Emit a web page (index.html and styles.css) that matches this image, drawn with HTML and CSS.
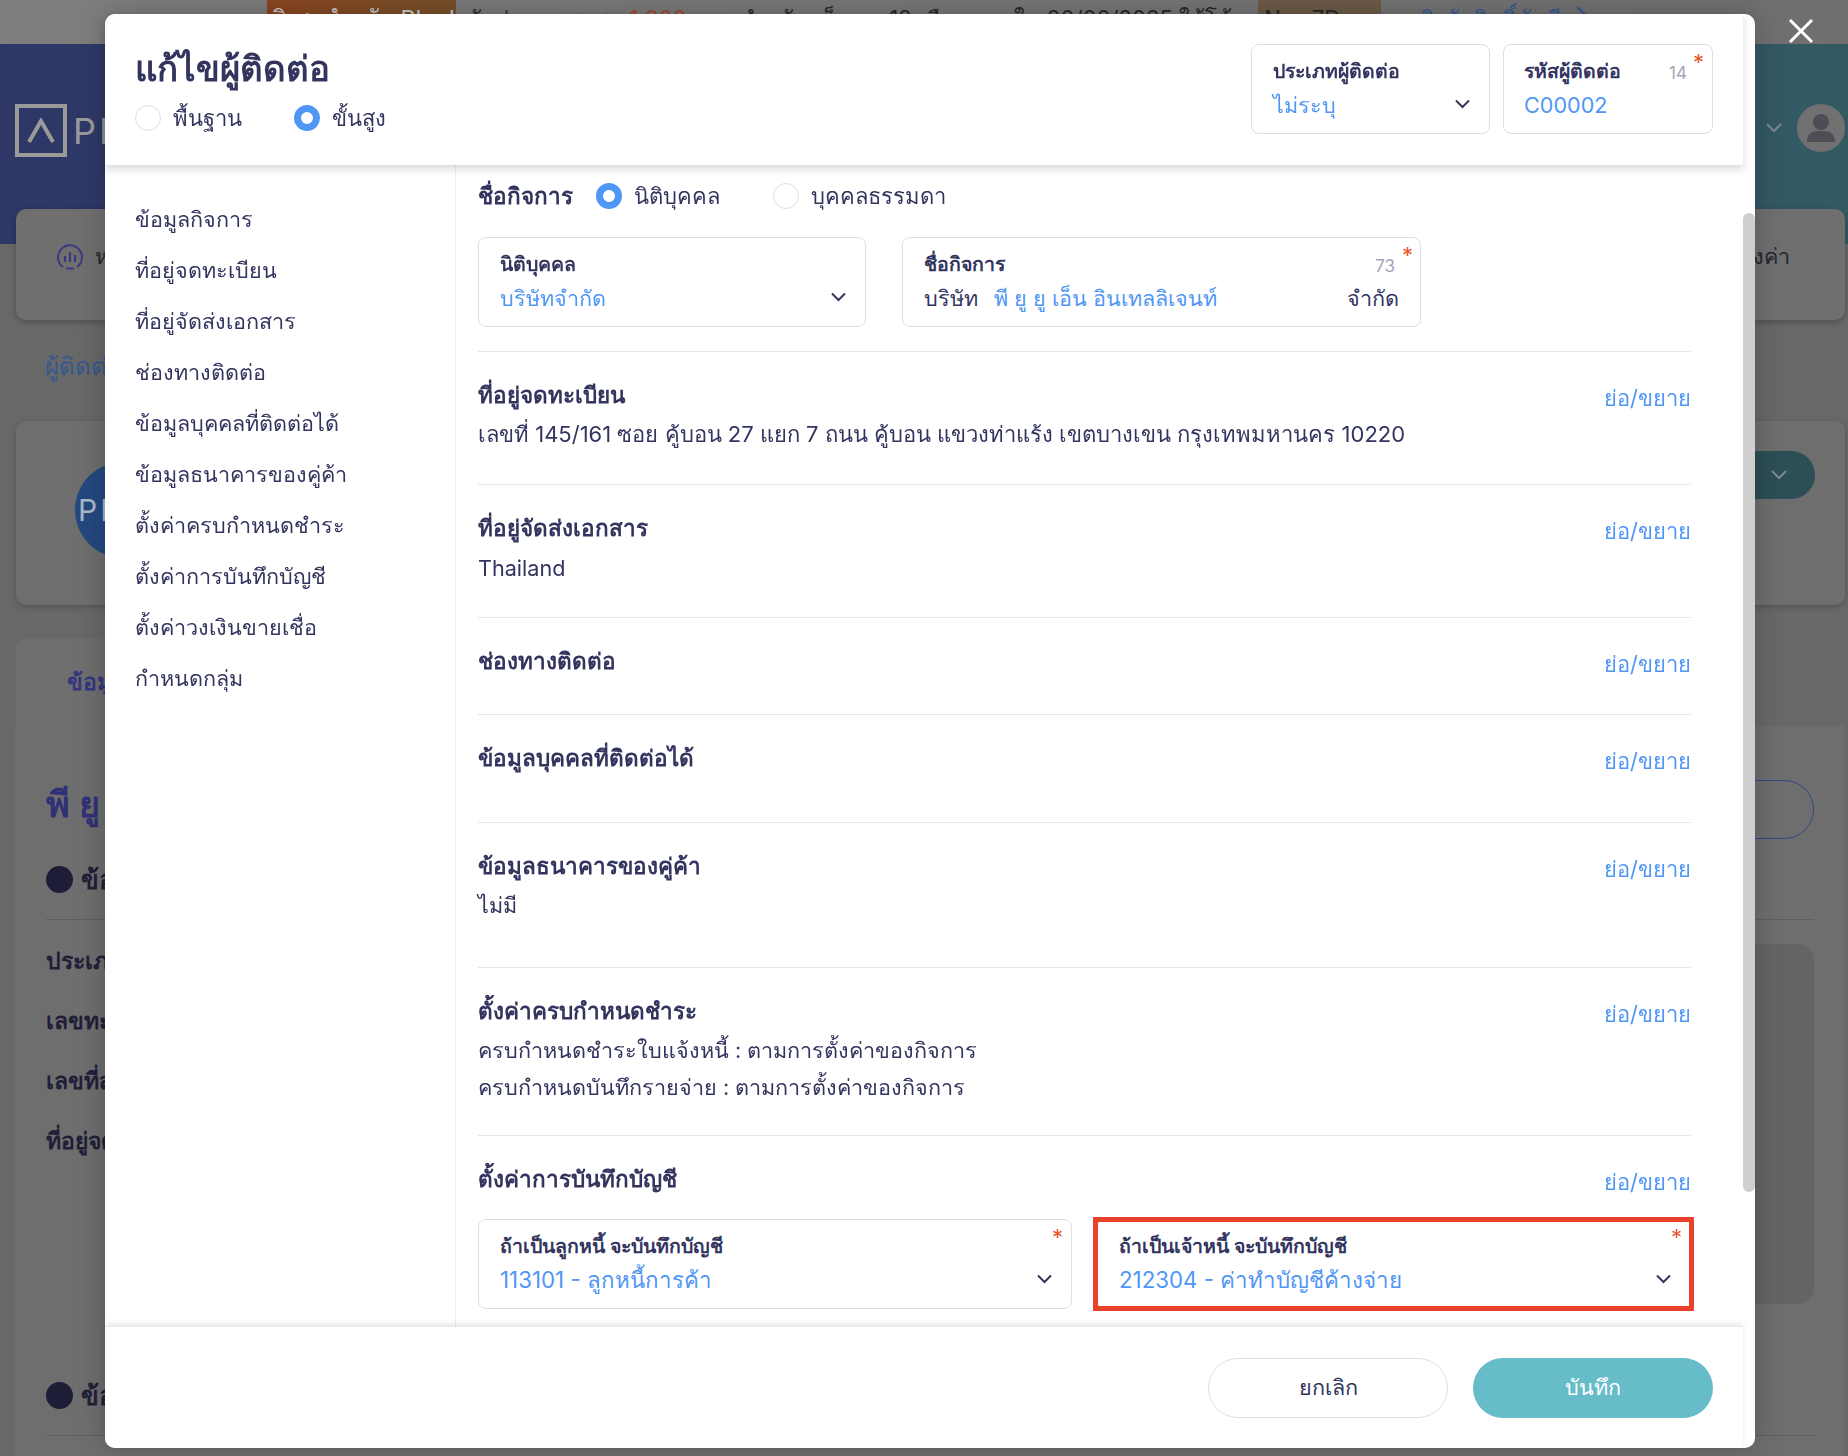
FILE: index.html
```html
<!DOCTYPE html>
<html lang="th">
<head>
<meta charset="utf-8">
<title>แก้ไขผู้ติดต่อ</title>
<link rel="stylesheet" href="styles.css">
</head>
<body>
<div class="backdrop">
  <div class="promo">
    <span class="promo-badge">พิเศษสำหรับ Pleul</span>
    <span class="promo-text">รับส่วนลด <b>สูงสุด 1,200 บาท</b> สำหรับแพ็กเกจ 12 เดือน ภายใน 00/00/2025 ใช้โค้ด</span>
    <span class="promo-code">New7Days</span>
    <span class="promo-link">คลิกรับสิทธิ์ทันที</span>
    <svg class="promo-chev" width="14" height="22" viewBox="0 0 14 22"><path d="M2 2l10 9-10 9" fill="none" stroke="#3a5a90" stroke-width="2.5"/></svg>
  </div>
  <div class="band">
    <div class="logo">
      <span class="logo-box"><svg width="30" height="26" viewBox="0 0 30 26"><path d="M3 24L15 3l12 21" fill="none" stroke="#9a9a9a" stroke-width="4"/></svg></span>
      <span class="logo-text">PEAK</span>
    </div>
    <div class="band-user">
      <svg width="16" height="10" viewBox="0 0 16 10"><path d="M1 1l7 7 7-7" fill="none" stroke="#7c8a8d" stroke-width="2"/></svg>
      <span class="avatar"><svg width="30" height="30" viewBox="0 0 30 30"><circle cx="15" cy="9" r="8" fill="#4d4e55"/><path d="M1 29c0-7 4-11 10-11h8c6 0 10 4 10 11z" fill="#4d4e55"/></svg></span>
    </div>
  </div>
  <div class="nav-card">
    <div class="nav-left">
      <svg width="26" height="26" viewBox="0 0 26 26"><path d="M6 23A12 12 0 1 1 20 23M9 24.500h8" fill="none" stroke="#3b3a80" stroke-width="2"/><path d="M8 12v6M13 8v10M18 11v7" stroke="#3b3a80" stroke-width="2.200"/></svg>
      <span>หน้าหลัก</span>
    </div>
    <span>ตั้งค่า</span>
  </div>
  <div class="crumb">ผู้ติดต่อ</div>
  <div class="company-card">
    <span class="company-logo">PEAK</span>
    <span class="company-btn"><svg width="16" height="10" viewBox="0 0 16 10"><path d="M1 1l7 7 7-7" fill="none" stroke="#7c8a8d" stroke-width="2"/></svg></span>
  </div>
  <div class="tab">ข้อมูลทั่วไป</div>
  <div class="detail">
    <div class="detail-head">
      <h2>พี ยู ยู เอ็น อินเทลลิเจนท์</h2>
      <span class="detail-pill"></span>
    </div>
    <div class="bullet-row"><i></i><span>ข้อมูลทั่วไป</span></div>
    <div class="detail-body">
      <div class="detail-rows">
        <div>ประเภทกิจการ</div>
        <div>เลขทะเบียน</div>
        <div>เลขที่สาขา</div>
        <div>ที่อยู่จดทะเบียน</div>
      </div>
      <div class="detail-panel"></div>
    </div>
    <div class="bullet-row bullet-row-next"><i></i><span>ข้อมูลติดต่อ</span></div>
  </div>
</div>

<div class="modal">
  <header class="modal-head">
    <div class="head-left">
      <h1>แก้ไขผู้ติดต่อ</h1>
      <div class="radio-row">
        <label class="radio"><i class="dot"></i>พื้นฐาน</label>
        <label class="radio radio-second"><i class="dot on"></i>ขั้นสูง</label>
      </div>
    </div>
    <div class="head-fields">
      <div class="field f-type">
        <div class="f-label">ประเภทผู้ติดต่อ</div>
        <div class="f-value">ไม่ระบุ</div>
        <svg class="chev" width="15" height="10" viewBox="0 0 15 10"><path d="M1 1.500l6.500 6.500L14 1.500" fill="none" stroke="#33355f" stroke-width="2"/></svg>
      </div>
      <div class="field f-code">
        <div class="f-label">รหัสผู้ติดต่อ</div>
        <div class="f-value">C00002</div>
        <span class="count">14</span><span class="star">*</span>
      </div>
    </div>
  </header>
  <div class="modal-body">
    <nav class="side">
      <a>ข้อมูลกิจการ</a>
      <a>ที่อยู่จดทะเบียน</a>
      <a>ที่อยู่จัดส่งเอกสาร</a>
      <a>ช่องทางติดต่อ</a>
      <a>ข้อมูลบุคคลที่ติดต่อได้</a>
      <a>ข้อมูลธนาคารของคู่ค้า</a>
      <a>ตั้งค่าครบกำหนดชำระ</a>
      <a>ตั้งค่าการบันทึกบัญชี</a>
      <a>ตั้งค่าวงเงินขายเชื่อ</a>
      <a>กำหนดกลุ่ม</a>
    </nav>
    <main class="content">
      <div class="name-row">
        <h3>ชื่อกิจการ</h3>
        <label class="radio radio-a"><i class="dot on"></i>นิติบุคคล</label>
        <label class="radio radio-b"><i class="dot"></i>บุคคลธรรมดา</label>
      </div>
      <div class="name-fields">
        <div class="field f-entity">
          <div class="f-label">นิติบุคคล</div>
          <div class="f-value">บริษัทจำกัด</div>
          <svg class="chev" width="15" height="10" viewBox="0 0 15 10"><path d="M1 1.500l6.500 6.500L14 1.500" fill="none" stroke="#33355f" stroke-width="2"/></svg>
        </div>
        <div class="field f-name">
          <div class="f-label">ชื่อกิจการ</div>
          <div class="f-value f-split"><span class="dark">บริษัท</span><span class="grow">พี ยู ยู เอ็น อินเทลลิเจนท์</span><span class="dark">จำกัด</span></div>
          <span class="count">73</span><span class="star">*</span>
        </div>
      </div>
      <section class="sec sec-addr">
        <div class="sec-head"><h3>ที่อยู่จดทะเบียน</h3><a>ย่อ/ขยาย</a></div>
        <p>เลขที่ 145/161 ซอย คู้บอน 27 แยก 7 ถนน คู้บอน แขวงท่าแร้ง เขตบางเขน กรุงเทพมหานคร 10220</p>
      </section>
      <section class="sec sec-ship">
        <div class="sec-head"><h3>ที่อยู่จัดส่งเอกสาร</h3><a>ย่อ/ขยาย</a></div>
        <p>Thailand</p>
      </section>
      <section class="sec sec-channel">
        <div class="sec-head"><h3>ช่องทางติดต่อ</h3><a>ย่อ/ขยาย</a></div>
      </section>
      <section class="sec sec-person">
        <div class="sec-head"><h3>ข้อมูลบุคคลที่ติดต่อได้</h3><a>ย่อ/ขยาย</a></div>
      </section>
      <section class="sec sec-bank">
        <div class="sec-head"><h3>ข้อมูลธนาคารของคู่ค้า</h3><a>ย่อ/ขยาย</a></div>
        <p>ไม่มี</p>
      </section>
      <section class="sec sec-due">
        <div class="sec-head"><h3>ตั้งค่าครบกำหนดชำระ</h3><a>ย่อ/ขยาย</a></div>
        <p>ครบกำหนดชำระใบแจ้งหนี้ : ตามการตั้งค่าของกิจการ</p>
        <p>ครบกำหนดบันทึกรายจ่าย : ตามการตั้งค่าของกิจการ</p>
      </section>
      <section class="sec sec-acct">
        <div class="sec-head"><h3>ตั้งค่าการบันทึกบัญชี</h3><a>ย่อ/ขยาย</a></div>
        <div class="acct-fields">
          <div class="field">
            <div class="f-label">ถ้าเป็นลูกหนี้ จะบันทึกบัญชี</div>
            <div class="f-value">113101 - ลูกหนี้การค้า</div>
            <svg class="chev" width="15" height="10" viewBox="0 0 15 10"><path d="M1 1.500l6.500 6.500L14 1.500" fill="none" stroke="#33355f" stroke-width="2"/></svg>
            <span class="star">*</span>
          </div>
          <div class="field">
            <div class="f-label">ถ้าเป็นเจ้าหนี้ จะบันทึกบัญชี</div>
            <div class="f-value">212304 - ค่าทำบัญชีค้างจ่าย</div>
            <svg class="chev" width="15" height="10" viewBox="0 0 15 10"><path d="M1 1.500l6.500 6.500L14 1.500" fill="none" stroke="#33355f" stroke-width="2"/></svg>
            <span class="star">*</span>
            <span class="callout"></span>
          </div>
        </div>
      </section>
    </main>
  </div>
  <footer class="modal-foot">
    <button class="btn">ยกเลิก</button>
    <button class="btn btn-save">บันทึก</button>
  </footer>
  <span class="thumb"></span>
</div>

<svg class="close" width="26" height="26" viewBox="0 0 26 26"><path d="M2 2l22 22M24 2L2 24" fill="none" stroke="#fff" stroke-width="3"/></svg>
</body>
</html>
```
FILE: styles.css
```css
* { box-sizing: border-box; }
html, body { margin: 0; height: 100%; }
body {
  width: 1848px;
  height: 1456px;
  overflow: hidden;
  background: #686868;
  color: #33355f;
  font-family: "Inter", "Noto Sans", sans-serif;
  font-size: 21.6px;
}

/* dimmed page behind the dialog */
.backdrop { height: 1456px; overflow: hidden; }
.promo {
  height: 44px;
  padding-left: 267px;
  display: flex;
  align-items: flex-start;
  background: linear-gradient(90deg, #7e7e7e, #6f6f6f);
  color: #262626;
  font-size: 22.2px;
  line-height: 37px;
  white-space: nowrap;
}
.promo-badge { width: 189px; height: 38px; padding-left: 4px; background: linear-gradient(90deg, #8a4520, #75502a); color: #c9c9c9; font-size: 23.5px; }
.promo-text { margin-left: 13px; }
.promo-text b { font-weight: 400; color: #a2452a; }
.promo-code { margin-left: 12px; width: 123px; height: 38px; padding-left: 6px; background: #6c5a46; }
.promo-link { margin-left: 24px; color: #35588f; }
.promo-chev { margin: 5px 0 0 14px; }

.band {
  height: 200px;
  padding: 60px 3px 0 15px;
  display: flex;
  justify-content: space-between;
  align-items: flex-start;
  background: linear-gradient(90deg, #2e3766, #335a63);
}
.logo { display: flex; gap: 6px; align-items: center; }
.logo-box {
  width: 52px;
  height: 53px;
  border: 4px solid #9a9a9a;
  display: flex;
  align-items: center;
  justify-content: center;
}
.logo-text { color: #9a9a9a; font-size: 36px; letter-spacing: 3px; }
.band-user { display: flex; align-items: center; gap: 15px; }
.avatar {
  width: 48px;
  height: 48px;
  border-radius: 50%;
  background: #717171;
  display: flex;
  align-items: center;
  justify-content: center;
}

.nav-card {
  margin: -35px 3px 0 16px;
  height: 111px;
  padding: 0 55px 16px 41px;
  display: flex;
  justify-content: space-between;
  align-items: center;
  background: #6f6f6f;
  border-radius: 10px;
  box-shadow: 0 2px 6px rgba(0, 0, 0, .25);
  color: #25252f;
}
.nav-left { display: flex; align-items: center; gap: 12px; }
.crumb { margin: 31px 0 0 45px; height: 32px; line-height: 32px; color: #35588f; font-size: 24px; }
.company-card {
  margin: 38px 3px 0 16px;
  height: 184px;
  padding: 41px 30px 0 59px;
  display: flex;
  justify-content: space-between;
  align-items: flex-start;
  background: #6e6e6e;
  border-radius: 10px;
  box-shadow: 0 2px 6px rgba(0, 0, 0, .2);
}
.company-logo {
  width: 96px;
  height: 96px;
  border-radius: 50%;
  background: #24497f;
  color: #a9b6c9;
  font-size: 30px;
  line-height: 96px;
  text-align: center;
  letter-spacing: 3px;
}
.company-btn {
  width: 200px;
  height: 48px;
  margin-top: -11px;
  padding-right: 28px;
  border-radius: 24px;
  background: #2c4e55;
  display: flex;
  align-items: center;
  justify-content: flex-end;
}
.tab {
  margin: 34px 0 0 16px;
  width: 300px;
  height: 87px;
  padding: 25px 0 0 51px;
  background: #6e6e6e;
  border-radius: 8px 8px 0 0;
  color: #343680;
  font-weight: 600;
  font-size: 23px;
}
.detail { margin: 0 4px 0 15px; height: 730px; padding: 54px 30px 0 31px; background: #6e6e6e; }
.detail-head { display: flex; justify-content: space-between; align-items: flex-start; height: 59px; }
.detail-head h2 { margin: 0; color: #2f3175; font-size: 36px; line-height: 48px; font-weight: 700; white-space: nowrap; }
.detail-pill { width: 300px; height: 59px; border: 1px solid #2f4a80; border-radius: 30px; }
.bullet-row {
  margin-top: 20px;
  height: 61px;
  padding-bottom: 20px;
  display: flex;
  align-items: center;
  gap: 8px;
  border-bottom: 1px solid #5e5e5e;
  color: #1f1f38;
  font-size: 26px;
  font-weight: 600;
}
.bullet-row i { width: 27px; height: 27px; border-radius: 50%; background: #1e1d38; }
.bullet-row-next { margin-top: 71px; }
.detail-body { display: flex; justify-content: space-between; }
.detail-rows { padding-top: 11px; color: #1f1f38; font-size: 23px; font-weight: 600; line-height: 60px; }
.detail-panel { margin-top: 24px; width: 900px; height: 360px; background: #646464; border-radius: 16px; }

/* dialog */
.modal {
  position: fixed;
  left: 105px;
  top: 14px;
  width: 1650px;
  height: 1434px;
  display: flex;
  flex-direction: column;
  background: #fff;
  border-radius: 10px;
  box-shadow: 0 0 28px rgba(0, 0, 0, .22);
}
.modal-head {
  flex: none;
  height: 151px;
  margin-right: 12px;
  padding: 30px 30px 0 30px;
  display: flex;
  justify-content: space-between;
  align-items: flex-start;
  position: relative;
  z-index: 2;
  background: #fff;
  border-radius: 10px 0 0 0;
  box-shadow: 0 4px 8px rgba(0, 0, 0, .16);
}
.modal-head h1 { margin: 0; font-size: 34.8px; line-height: 48px; font-weight: 600; }
.radio-row { margin-top: 13px; display: flex; }
.radio { display: flex; align-items: center; gap: 12px; font-size: 22px; line-height: 26px; white-space: nowrap; }
.radio-second { margin-left: 52px; }
.dot { flex: none; width: 26px; height: 26px; border-radius: 50%; border: 1px solid #dcdce8; background: #fff; }
.dot.on { border: 7px solid #5096f5; }
.head-fields { display: flex; gap: 13px; }

.field {
  position: relative;
  height: 90px;
  padding: 13px 21px 0;
  background: #fff;
  border: 1px solid #dcdce8;
  border-radius: 8px;
}
.f-label { font-size: 19.5px; font-weight: 600; line-height: 26px; white-space: nowrap; }
.f-value { margin-top: 3px; color: #5096f5; line-height: 36px; white-space: nowrap; }
.chev { position: absolute; right: 19px; top: 54px; }
.count { position: absolute; right: 25px; top: 16px; color: #a5a5b5; font-size: 17px; line-height: 24px; }
.star { position: absolute; right: 8px; top: 5px; color: #e8562f; font-size: 22px; line-height: 24px; }
.f-type { width: 239px; }
.f-code { width: 210px; padding-left: 20px; }

.modal-body { flex: 1; min-height: 0; display: flex; }
.side {
  flex: none;
  width: 351px;
  padding: 29px 0 0 30px;
  border-right: 1px solid #eceef2;
  display: flex;
  flex-direction: column;
}
.side a { height: 51px; line-height: 51px; white-space: nowrap; }
.content { flex: none; width: 1264px; padding: 13px 0 0 22px; overflow: hidden; }
.content > * { width: 1213px; }

.name-row { display: flex; align-items: center; height: 36px; }
h3 { margin: 0; font-size: 22.5px; font-weight: 600; line-height: 36px; white-space: nowrap; }
.radio-a { margin-left: 23px; }
.radio-b { margin-left: 53px; }
.name-fields { margin-top: 23px; display: flex; gap: 36px; }
.f-entity { width: 388px; }
.f-name { width: 519px; }
.f-name .star { right: 7px; }
.f-split { display: flex; gap: 16px; }
.dark { color: #33355f; }
.grow { flex: 1; }

.sec { padding: 25px 0 31px; border-bottom: 1px solid #e7e7eb; }
.name-fields + .sec { margin-top: 24px; border-top: 1px solid #e7e7eb; }
.sec-head { display: flex; justify-content: space-between; align-items: flex-start; height: 36px; }
.sec-head a { margin-top: 3px; color: #5096f5; font-size: 22px; line-height: 36px; }
.sec p { margin: 0; line-height: 37px; }
.sec-head + p { margin-top: 3px; }
.sec-addr p { font-size: 22px; }
.sec-ship { padding-bottom: 30px; }
.sec-ship p { margin-top: 4px; }
.sec-channel { padding-bottom: 35px; }
.sec-person { padding-bottom: 46px; }
.sec-bank { padding-bottom: 43px; }
.sec-due { padding-bottom: 29px; }
.sec-acct { border-bottom: 0; padding-bottom: 0; }
.acct-fields { margin-top: 22px; display: grid; grid-template-columns: 1fr 1fr; gap: 25px; }
.acct-fields .f-value { font-size: 22.3px; }
.callout { position: absolute; left: -5px; right: -4px; top: -3px; bottom: -3px; border: 5px solid #e8402a; }

.modal-foot {
  flex: none;
  height: 122px;
  margin-right: 12px;
  padding: 31px 30px 0 0;
  display: flex;
  justify-content: flex-end;
  gap: 25px;
  position: relative;
  z-index: 2;
  background: #fff;
  border-top: 1px solid #e5e5e5;
  border-radius: 0 0 0 10px;
  box-shadow: 0 -3px 5px rgba(0, 0, 0, .08);
}
.btn {
  width: 240px;
  height: 60px;
  padding-bottom: 3px;
  border: 1px solid #dcdce8;
  border-radius: 30px;
  background: #fff;
  color: #33355f;
  font: inherit;
}
.btn-save { border: 0; background: #67bcc9; color: #fff; }
.thumb { position: absolute; right: 0; top: 199px; width: 12px; height: 979px; border-radius: 6px; background: #cfcfcf; z-index: 3; }
.close { position: fixed; left: 1788px; top: 18px; }
```
